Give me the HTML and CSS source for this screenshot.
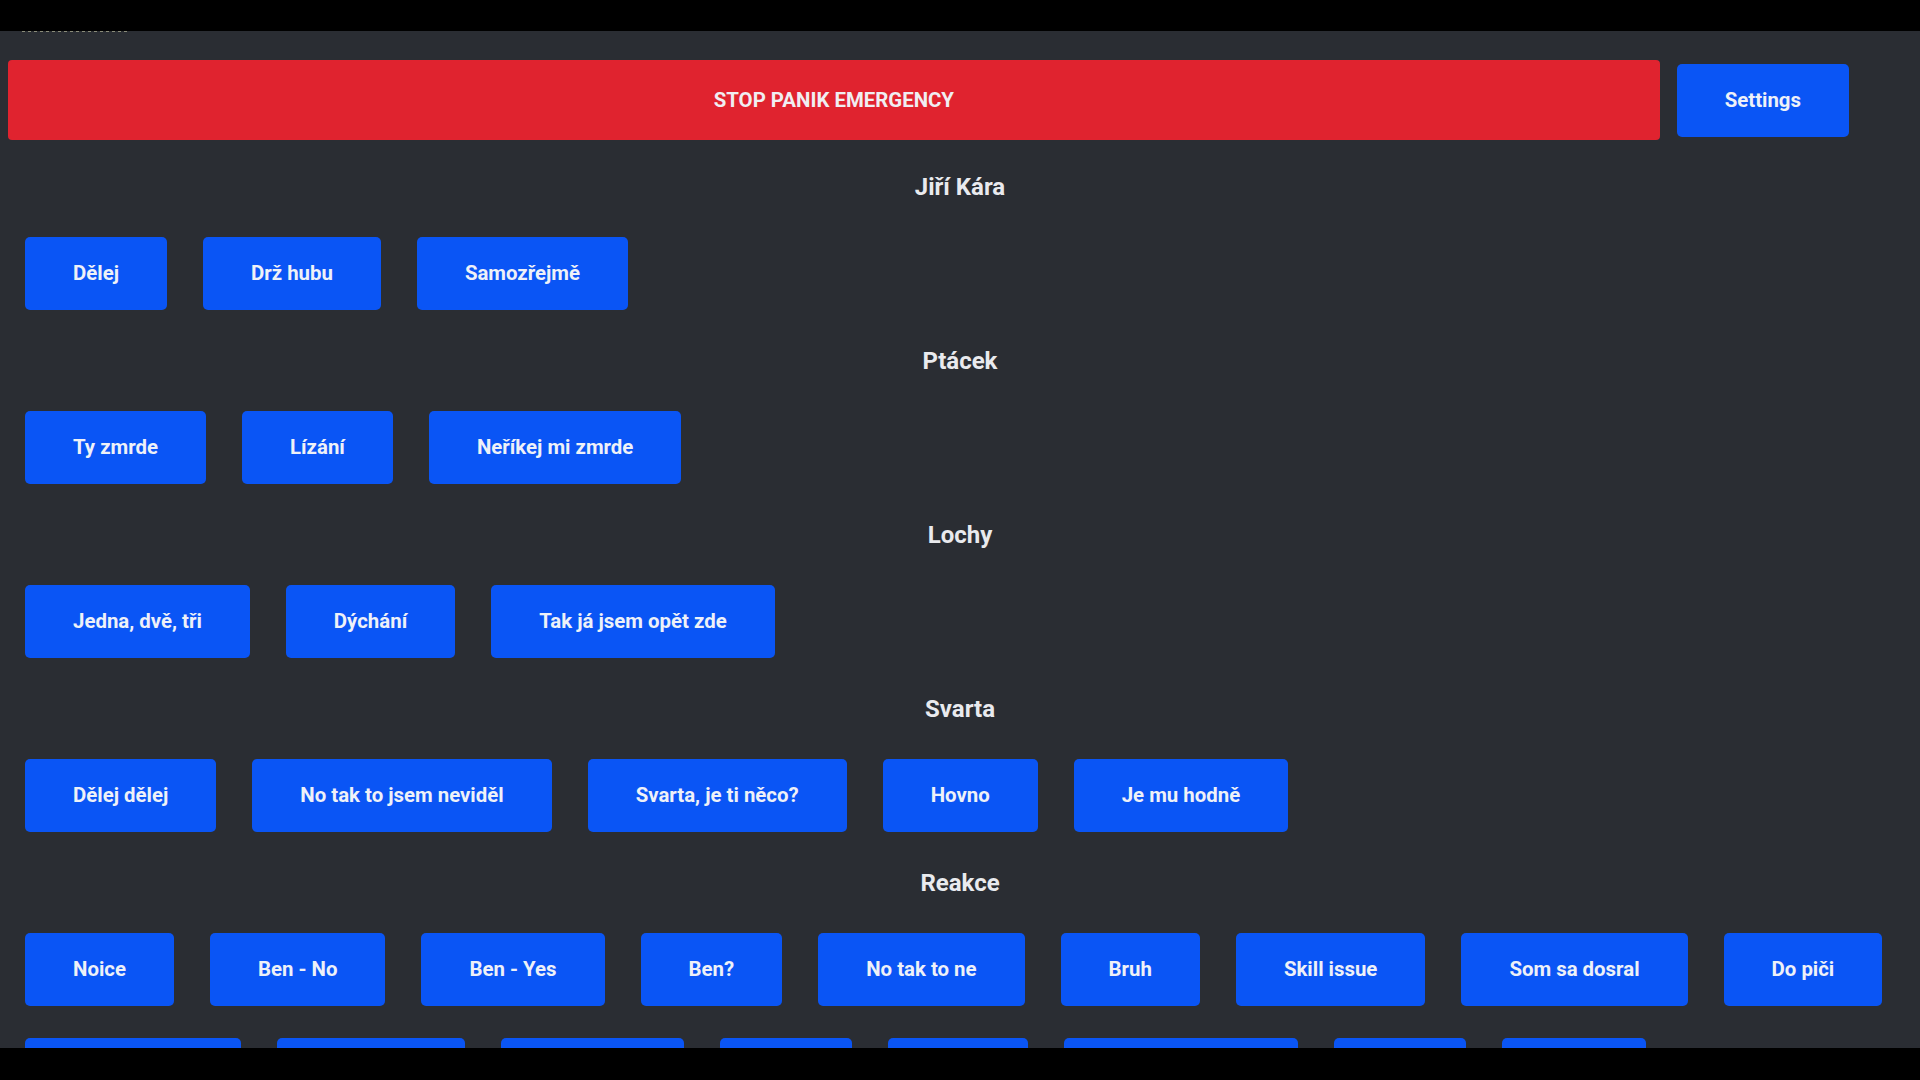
FILE: index.html
```html
<!DOCTYPE html>
<html lang="cs">
<head>
<meta charset="utf-8">
<title>Soundboard</title>
<link rel="stylesheet" href="styles.css">
</head>
<body>
<div class="screen">
  <div class="topline"></div>
  <header class="topbar">
    <button class="panic">STOP PANIK EMERGENCY</button>
    <button class="btn">Settings</button>
  </header>

  <section class="section">
    <h2 class="title">Jiří Kára</h2>
    <div class="row">
      <button class="btn">Dělej</button>
      <button class="btn">Drž hubu</button>
      <button class="btn">Samozřejmě</button>
    </div>
  </section>

  <section class="section">
    <h2 class="title">Ptácek</h2>
    <div class="row">
      <button class="btn">Ty zmrde</button>
      <button class="btn">Lízání</button>
      <button class="btn">Neříkej mi zmrde</button>
    </div>
  </section>

  <section class="section">
    <h2 class="title">Lochy</h2>
    <div class="row">
      <button class="btn">Jedna, dvě, tři</button>
      <button class="btn">Dýchání</button>
      <button class="btn">Tak já jsem opět zde</button>
    </div>
  </section>

  <section class="section">
    <h2 class="title">Svarta</h2>
    <div class="row">
      <button class="btn">Dělej dělej</button>
      <button class="btn">No tak to jsem neviděl</button>
      <button class="btn">Svarta, je ti něco?</button>
      <button class="btn">Hovno</button>
      <button class="btn">Je mu hodně</button>
    </div>
  </section>

  <section class="section">
    <h2 class="title">Reakce</h2>
    <div class="row">
      <button class="btn">Noice</button>
      <button class="btn">Ben - No</button>
      <button class="btn">Ben - Yes</button>
      <button class="btn">Ben?</button>
      <button class="btn">No tak to ne</button>
      <button class="btn">Bruh</button>
      <button class="btn">Skill issue</button>
      <button class="btn">Som sa dosral</button>
      <button class="btn">Do piči</button>
      <button class="btn">To jako bylo?</button>
      <button class="btn">Nevím, no</button>
      <button class="btn">Dobře, no</button>
      <button class="btn">Aha</button>
      <button class="btn">Wow</button>
      <button class="btn">To snad není?!!</button>
      <button class="btn">Ano</button>
      <button class="btn">Haha</button>
    </div>
  </section>
</div>
</body>
</html>
```

FILE: styles.css
```css
html, body {
  margin: 0;
  padding: 0;
  background: #000;
  width: 1920px;
  height: 1080px;
  overflow: hidden;
}

.screen {
  margin-top: 31px;
  height: 1017px;
  overflow: hidden;
  background: #2a2d33;
  font-family: Roboto, "Liberation Sans", sans-serif;
  color: #eceef4;
}

.topline {
  height: 1px;
  width: 106px;
  margin-left: 22px;
  background: repeating-linear-gradient(90deg, #8a8c7a 0 3px, transparent 3px 6px);
}

.topbar {
  display: flex;
  align-items: center;
  gap: 17px;
  margin-top: 28px;
  padding: 0 71px 0 8px;
}

.panic {
  flex: 1;
  height: 80px;
  border: 0;
  border-radius: 4px;
  background: #e0232f;
  color: #f0eef2;
  font: 700 20.4px/25px Roboto, "Liberation Sans", sans-serif;
  cursor: pointer;
}

.btn {
  border: 0;
  border-radius: 5px;
  padding: 24px 48px;
  background: #0a55f5;
  color: #eef1f8;
  font: 700 20.4px/25px Roboto, "Liberation Sans", sans-serif;
  white-space: nowrap;
  cursor: pointer;
}

.section {
  padding-top: 37px;
}

.section:first-of-type {
  padding-top: 33px;
}

.title {
  margin: 0 0 36px;
  text-align: center;
  font-size: 24px;
  line-height: 28px;
  font-weight: 700;
  color: #e9eaee;
}

.row {
  display: flex;
  flex-wrap: wrap;
  gap: 32px 36px;
  padding: 0 25px;
}
```
